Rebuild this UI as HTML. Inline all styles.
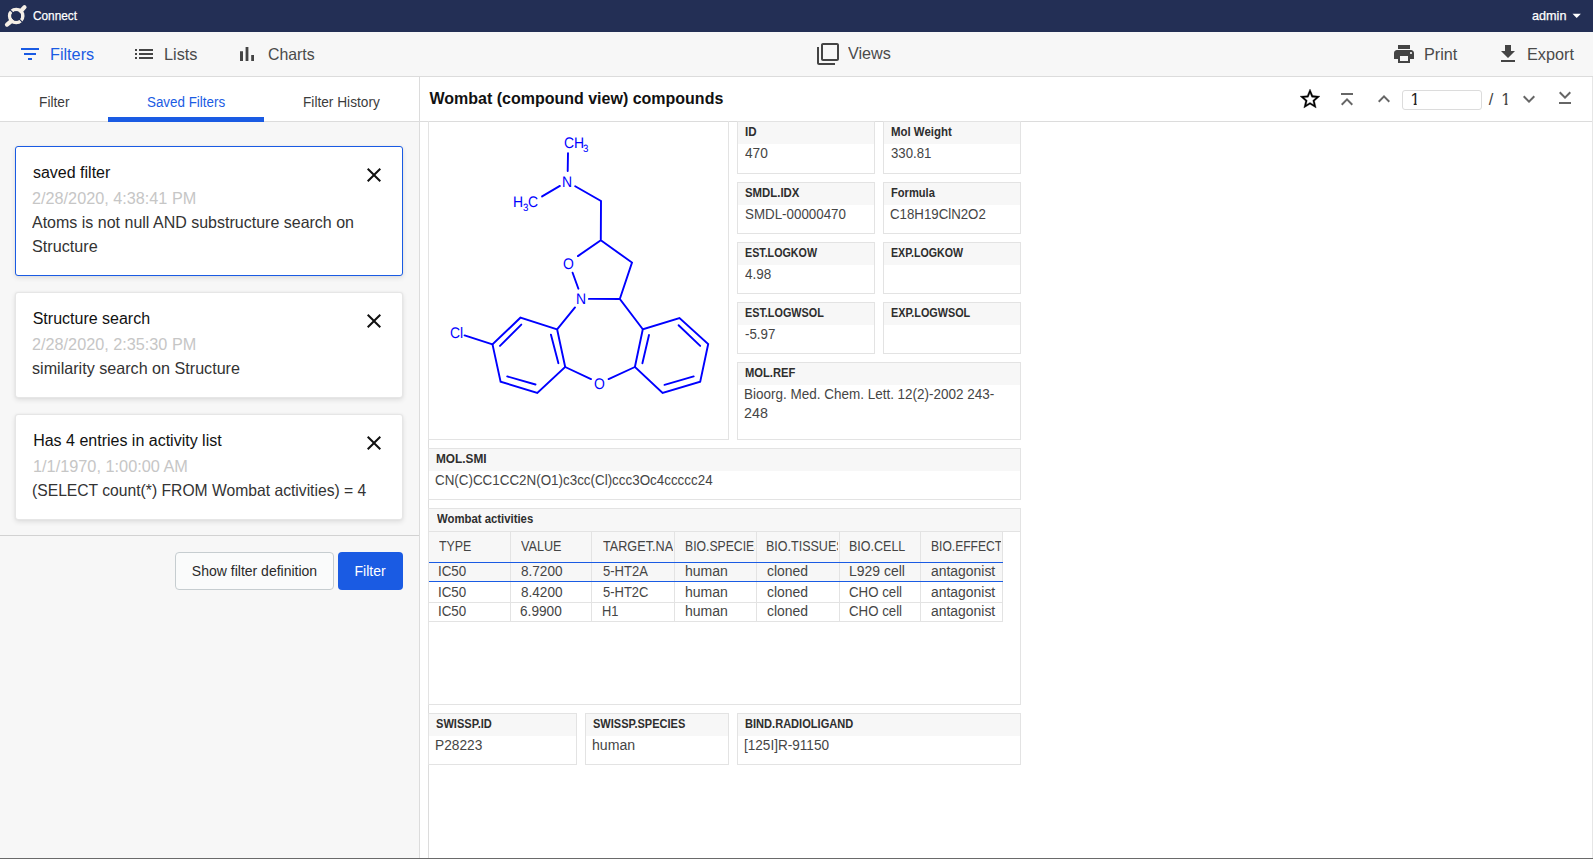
<!DOCTYPE html>
<html lang="en">
<head>
<meta charset="utf-8">
<title>Connect</title>
<style>
html,body{margin:0;padding:0;}
body{width:1593px;height:859px;position:relative;overflow:hidden;background:#fff;
  font-family:"Liberation Sans",sans-serif;}
.a{position:absolute;}
.t{position:absolute;white-space:nowrap;transform-origin:0 0;font-family:"Liberation Sans",sans-serif;}
.clip{position:absolute;overflow:hidden;}
svg{position:absolute;display:block;overflow:visible;}
#nav{left:0;top:0;width:1593px;height:32px;background:#232f55;}
#toolbar{left:0;top:32px;width:1593px;height:44px;background:#f7f7f7;border-bottom:1px solid #dcdcdc;}
#side{left:0;top:77px;width:419px;height:782px;background:#f7f7f7;border-right:1px solid #dcdcdc;}
#tabs{left:0;top:77px;width:419px;height:44px;background:#fff;border-bottom:1px solid #dcdcdc;}
#tabline{left:108px;top:117px;width:156px;height:5px;background:#1a5be3;}
.card{position:absolute;left:15px;width:386px;background:#fff;border:1px solid #e6e6e6;border-radius:3px;
  box-shadow:0 2px 5px rgba(0,0,0,.10),0 0 2px rgba(0,0,0,.05);}
.card.sel{border-color:#1a5be3;}
#sep{left:0;top:535px;width:419px;height:1px;background:#d2d2d2;}
#btn1{left:175px;top:552px;width:157px;height:36px;border:1px solid #c6cdd0;border-radius:4px;background:#fafbfb;}
#btn2{left:338px;top:552px;width:65px;height:38px;border-radius:4px;background:#1a5be3;}
#hdr{left:420px;top:77px;width:1173px;height:44px;background:#fff;border-bottom:1px solid #dcdcdc;}
#pl{left:428px;top:122px;width:1px;height:737px;background:#dcdcdc;}
#rightedge{left:1592px;top:77px;width:1px;height:782px;background:#e6e6e6;}
#bottomline{left:0;top:858px;width:1593px;height:1px;background:#6a6a6a;}
#pginput{left:1402px;top:90px;width:78px;height:18px;border:1px solid #dcdcdc;border-radius:3px;background:#fff;}
.fld{position:absolute;box-sizing:border-box;border:1px solid #e3e3e3;background:#fff;}
.fl{position:absolute;left:0;top:0;right:0;height:22px;background:#f7f7f7;}
#struct{left:428px;top:121px;width:301px;height:319px;box-sizing:border-box;border:1px solid #e3e3e3;border-top:none;}
#act{left:428px;top:508px;width:593px;height:197px;box-sizing:border-box;border:1px solid #e3e3e3;background:#fff;}
#actl{left:429px;top:509px;width:591px;height:22px;background:#f7f7f7;border-bottom:1px solid #e3e3e3;}
#thead{left:429px;top:531px;width:574px;height:31px;background:#f7f7f7;border-top:1px solid #e3e3e3;box-sizing:border-box;}
#row1{left:429px;top:562px;width:574px;height:20px;background:#f7f7f7;border-top:1px solid #1a5be3;border-bottom:1px solid #1a5be3;box-sizing:border-box;}
.hl{position:absolute;left:429px;width:574px;height:1px;background:#e3e3e3;}
.vl{position:absolute;top:532px;width:1px;height:90px;background:#e3e3e3;}
</style>
</head>
<body>
<div class="a" id="nav"></div>
<div class="a" id="toolbar"></div>
<div class="a" id="side"></div>
<div class="a" id="tabs"></div>
<div class="a" id="tabline"></div>
<div class="card sel" style="top:146px;height:128px"></div>
<div class="card" style="top:292px;height:104px"></div>
<div class="card" style="top:414px;height:104px"></div>
<div class="a" id="sep"></div>
<div class="a" id="btn1"></div>
<div class="a" id="btn2"></div>
<div class="a" id="hdr"></div>
<div class="a" id="pl"></div>
<div class="a" id="rightedge"></div>
<div class="a" id="pginput"></div>
<div class="a" id="struct"></div>
<div class="fld" style="left:737px;top:121px;width:138px;height:53px"><div class="fl"></div></div>
<div class="fld" style="left:883px;top:121px;width:138px;height:53px"><div class="fl"></div></div>
<div class="fld" style="left:737px;top:182px;width:138px;height:52px"><div class="fl"></div></div>
<div class="fld" style="left:883px;top:182px;width:138px;height:52px"><div class="fl"></div></div>
<div class="fld" style="left:737px;top:242px;width:138px;height:52px"><div class="fl"></div></div>
<div class="fld" style="left:883px;top:242px;width:138px;height:52px"><div class="fl"></div></div>
<div class="fld" style="left:737px;top:302px;width:138px;height:52px"><div class="fl"></div></div>
<div class="fld" style="left:883px;top:302px;width:138px;height:52px"><div class="fl"></div></div>
<div class="fld" style="left:737px;top:362px;width:284px;height:78px"><div class="fl"></div></div>
<div class="fld" style="left:428px;top:448px;width:593px;height:52px"><div class="fl"></div></div>
<div class="fld" style="left:428px;top:713px;width:149px;height:52px"><div class="fl"></div></div>
<div class="fld" style="left:585px;top:713px;width:144px;height:52px"><div class="fl"></div></div>
<div class="fld" style="left:737px;top:713px;width:284px;height:52px"><div class="fl"></div></div>
<div class="a" id="act"></div>
<div class="a" id="actl"></div>
<div class="a" id="thead"></div>
<div class="a" id="row1"></div>
<div class="hl" style="top:602px"></div>
<div class="hl" style="top:621px"></div>
<div class="vl" style="left:510px"></div>
<div class="vl" style="left:591px"></div>
<div class="vl" style="left:674px"></div>
<div class="vl" style="left:756px"></div>
<div class="vl" style="left:839px"></div>
<div class="vl" style="left:920px"></div>
<div class="vl" style="left:1002px"></div>
<div class="a" id="row1b" style="left:429px;top:562px;width:574px;height:1px;background:#1a5be3"></div>
<div class="a" id="row1c" style="left:429px;top:581px;width:574px;height:1px;background:#1a5be3"></div>

<!-- logo -->
<svg style="left:0;top:0" width="40" height="32" viewBox="0 0 40 32">
  <circle cx="16.2" cy="16" r="6.6" fill="none" stroke="#f5efe6" stroke-width="3.5"/>
  <line x1="9.6" y1="9.4" x2="22.8" y2="22.6" stroke="#232f55" stroke-width="1.1"/>
  <circle cx="16.2" cy="16" r="4.85" fill="#232f55"/>
  <line x1="21" y1="11" x2="24.5" y2="7.2" stroke="#f5efe6" stroke-width="4.2" stroke-linecap="round"/>
  <line x1="11.4" y1="21" x2="7" y2="24.6" stroke="#f5efe6" stroke-width="4.2" stroke-linecap="round"/>
</svg>
<!-- nav caret -->
<svg style="left:1572px;top:13px" width="10" height="6" viewBox="0 0 10 6"><path d="M0.5 0.8h8.4l-4.2 4.2z" fill="#fff"/></svg>

<!-- toolbar icons -->
<svg style="left:18px;top:42px" width="24" height="24" viewBox="0 0 24 24"><path fill="#1a5be3" d="M10 18h4v-2h-4v2zM3 6v2h18V6H3zm3 7h12v-2H6v2z"/></svg>
<svg style="left:132px;top:42px" width="24" height="24" viewBox="0 0 24 24"><path fill="#444" d="M3 13h2v-2H3v2zm0 4h2v-2H3v2zm0-8h2V7H3v2zm4 4h14v-2H7v2zm0 4h14v-2H7v2zM7 7v2h14V7H7z"/></svg>
<svg style="left:235px;top:42px" width="24" height="24" viewBox="0 0 24 24"><path fill="#444" d="M5 9.2h3V19H5zM10.6 5h2.8v14h-2.8zm5.6 8H19v6h-2.8z"/></svg>
<svg style="left:816px;top:42px" width="24" height="24" viewBox="0 0 24 24"><path fill="#444" d="M3 5H1v16c0 1.1.9 2 2 2h16v-2H3V5zm18-4H7c-1.1 0-2 .9-2 2v14c0 1.1.9 2 2 2h14c1.1 0 2-.9 2-2V3c0-1.1-.9-2-2-2zm0 16H7V3h14v14z"/></svg>
<svg style="left:1392px;top:42px" width="24" height="24" viewBox="0 0 24 24"><path fill="#444" d="M19 8H5c-1.66 0-3 1.34-3 3v6h4v4h12v-4h4v-6c0-1.66-1.34-3-3-3zm-3 11H8v-5h8v5zm3-7c-.55 0-1-.45-1-1s.45-1 1-1 1 .45 1 1-.45 1-1 1zm-1-9H6v4h12V3z"/></svg>
<svg style="left:1496px;top:42px" width="24" height="24" viewBox="0 0 24 24"><path fill="#444" d="M19 9h-4V3H9v6H5l7 7 7-7zM5 18v2h14v-2H5z"/></svg>

<!-- card close icons -->
<svg style="left:362px;top:163px" width="24" height="24" viewBox="0 0 24 24"><path fill="#111" d="M19 6.41L17.59 5 12 10.59 6.41 5 5 6.41 10.59 12 5 17.59 6.41 19 12 13.41 17.59 19 19 17.59 13.41 12z"/></svg>
<svg style="left:362px;top:309px" width="24" height="24" viewBox="0 0 24 24"><path fill="#111" d="M19 6.41L17.59 5 12 10.59 6.41 5 5 6.41 10.59 12 5 17.59 6.41 19 12 13.41 17.59 19 19 17.59 13.41 12z"/></svg>
<svg style="left:362px;top:431px" width="24" height="24" viewBox="0 0 24 24"><path fill="#111" d="M19 6.41L17.59 5 12 10.59 6.41 5 5 6.41 10.59 12 5 17.59 6.41 19 12 13.41 17.59 19 19 17.59 13.41 12z"/></svg>

<!-- header icons -->
<svg style="left:1297.9px;top:87.4px" width="24" height="24" viewBox="0 0 24 24"><path fill="#000" stroke="#000" stroke-width="0.3" d="M22 9.24l-7.19-.62L12 2 9.19 8.63 2 9.24l5.46 4.73L5.82 21 12 17.27 18.18 21l-1.63-7.03L22 9.24zM12 15.4l-3.76 2.27 1-4.28-3.32-2.88 4.38-.38L12 6.1l1.71 4.04 4.38.38-3.32 2.88 1 4.28L12 15.4z"/></svg>
<svg style="left:1335.4px;top:86.6px" width="24" height="24" viewBox="0 0 24 24"><path fill="#666" transform="rotate(90 12 12)" d="M18.41 16.59L13.82 12l4.59-4.59L17 6l-6 6 6 6zM6 6h2v12H6z"/></svg>
<svg style="left:1372.4px;top:87.3px" width="24" height="24" viewBox="0 0 24 24"><path fill="#666" d="M12 8l-6 6 1.41 1.41L12 10.83l4.59 4.58L18 14z"/></svg>
<svg style="left:1517.2px;top:87.3px" width="24" height="24" viewBox="0 0 24 24"><path fill="#666" d="M16.59 8.59L12 13.17 7.41 8.59 6 10l6 6 6-6z"/></svg>
<svg style="left:1552.9px;top:86.2px" width="24" height="24" viewBox="0 0 24 24"><path fill="#666" transform="rotate(90 12 12)" d="M5.59 7.41L10.18 12l-4.59 4.59L7 18l6-6-6-6zM16 6h2v12h-2z"/></svg>

<!-- molecule -->
<svg style="left:0;top:0" width="1593" height="859" viewBox="0 0 1593 859">
<g stroke="#0000ff" stroke-width="1.9" stroke-linecap="round" fill="none">
<path d="M568 153.1L567.7 171.1M559.9 185.9L542.1 196.4M575.2 186.2L601 201L600.8 240.2L577.9 256.1M600.8 240.2L632 262.6L619.8 299M572.6 272.7L578.4 288.7M588.9 298.9L619.8 299L642.8 329.3M575 307.4L557.1 329.3"/>
<path d="M557.1 329.3L520.4 317.7L492.5 344.4L500.6 381.7L537.3 393L565.2 367Z"/>
<path d="M521.3 324.6L500 345.9M507.2 376.4L535.5 384.5M550.9 334.6L558.4 363.2"/>
<path d="M492.5 344.4L464.6 335.4M565.2 367L591 379.1M608.6 379.1L634.9 367"/>
<path d="M642.8 329.3L634.9 367L662.6 393L700.2 381.7L708.2 344L679.5 318Z"/>
<path d="M649 335L642.4 363.2M678.6 325.2L700.2 345.9M664.5 384.9L693.7 376.4"/>
</g>
</svg>

<span class="t" style="left:33.14px;top:8.00px;font-size:13.39px;line-height:15px;color:#ffffff;-webkit-text-stroke:0.25px #ffffff;transform:scaleX(0.8846);">Connect</span>
<span class="t" style="left:1531.80px;top:8.00px;font-size:13.39px;line-height:15px;color:#ffffff;-webkit-text-stroke:0.25px #ffffff;transform:scaleX(0.9462);">admin</span>
<span class="t" style="left:50.23px;top:45.00px;font-size:16.48px;line-height:18px;color:#1a5be3;transform:scaleX(0.9847);">Filters</span>
<span class="t" style="left:163.93px;top:45.00px;font-size:16.48px;line-height:18px;color:#4a4a4a;transform:scaleX(0.9881);">Lists</span>
<span class="t" style="left:267.96px;top:45.00px;font-size:16.48px;line-height:18px;color:#4a4a4a;transform:scaleX(0.9629);">Charts</span>
<span class="t" style="left:848.40px;top:44.00px;font-size:16.48px;line-height:18px;color:#4a4a4a;transform:scaleX(0.9827);">Views</span>
<span class="t" style="left:1424.33px;top:45.00px;font-size:16.48px;line-height:18px;color:#4a4a4a;transform:scaleX(0.9830);">Print</span>
<span class="t" style="left:1527.23px;top:45.00px;font-size:16.48px;line-height:18px;color:#4a4a4a;transform:scaleX(0.9871);">Export</span>
<span class="t" style="left:38.63px;top:94.00px;font-size:14.21px;line-height:16px;color:#3c3c3c;transform:scaleX(0.9672);">Filter</span>
<span class="t" style="left:147.18px;top:94.00px;font-size:14.21px;line-height:16px;color:#1a5be3;transform:scaleX(0.9423);">Saved Filters</span>
<span class="t" style="left:303.13px;top:94.00px;font-size:14.21px;line-height:16px;color:#3c3c3c;transform:scaleX(0.9640);">Filter History</span>
<span class="t" style="left:32.95px;top:164.00px;font-size:16px;line-height:17px;color:#111111;">saved filter</span>
<span class="t" style="left:31.64px;top:189.00px;font-size:16.48px;line-height:18px;color:#c6c6c6;transform:scaleX(0.9856);">2/28/2020, 4:38:41 PM</span>
<span class="t" style="left:32.40px;top:213.00px;font-size:16.48px;line-height:18px;color:#333333;transform:scaleX(0.9718);">Atoms is not null AND substructure search on</span>
<span class="t" style="left:31.89px;top:237.00px;font-size:16.48px;line-height:18px;color:#333333;transform:scaleX(0.9836);">Structure</span>
<span class="t" style="left:32.70px;top:310.00px;font-size:16px;line-height:17px;color:#111111;">Structure search</span>
<span class="t" style="left:31.64px;top:335.00px;font-size:16.48px;line-height:18px;color:#c6c6c6;transform:scaleX(0.9856);">2/28/2020, 2:35:30 PM</span>
<span class="t" style="left:32.15px;top:359.00px;font-size:16.48px;line-height:18px;color:#333333;transform:scaleX(0.9794);">similarity search on Structure</span>
<span class="t" style="left:33.15px;top:432.00px;font-size:16px;line-height:17px;color:#111111;">Has 4 entries in activity list</span>
<span class="t" style="left:32.88px;top:457.00px;font-size:16.48px;line-height:18px;color:#c6c6c6;transform:scaleX(0.9894);">1/1/1970, 1:00:00 AM</span>
<span class="t" style="left:31.66px;top:481.00px;font-size:16.48px;line-height:18px;color:#333333;transform:scaleX(0.9517);">(SELECT count(*) FROM Wombat activities) = 4</span>
<span class="t" style="left:191.86px;top:563.00px;font-size:14px;line-height:16px;color:#2a2a2a;">Show filter definition</span>
<span class="t" style="left:354.51px;top:563.00px;font-size:14px;line-height:16px;color:#ffffff;">Filter</span>
<span class="t" style="left:429.40px;top:90.00px;font-size:16px;line-height:17px;color:#111111;font-weight:700;">Wombat (compound view) compounds</span>
<span class="t" style="left:1410.47px;top:90.00px;font-size:16.5px;line-height:18px;color:#222222;clip-path:polygon(0 0,100% 0,100% 12.9px,6.2px 12.9px,6.2px 100%,3.2px 100%,3.2px 12.9px,0 12.9px);">1</span>
<span class="t" style="left:1488.70px;top:90.00px;font-size:16.5px;line-height:18px;color:#444444;">/</span>
<span class="t" style="left:1501.37px;top:90.00px;font-size:16.5px;line-height:18px;color:#444444;clip-path:polygon(0 0,100% 0,100% 12.9px,6.2px 12.9px,6.2px 100%,3.2px 100%,3.2px 12.9px,0 12.9px);">1</span>
<span class="t" style="left:744.97px;top:125.00px;font-size:12.67px;line-height:14px;color:#2e2e2e;font-weight:700;transform:scaleX(0.9147);">ID</span>
<span class="t" style="left:744.89px;top:145.00px;font-size:14.42px;line-height:16px;color:#454545;transform:scaleX(0.9500);">470</span>
<span class="t" style="left:890.98px;top:125.00px;font-size:12.67px;line-height:14px;color:#2e2e2e;font-weight:700;transform:scaleX(0.9035);">Mol Weight</span>
<span class="t" style="left:890.69px;top:145.00px;font-size:14.42px;line-height:16px;color:#454545;transform:scaleX(0.9148);">330.81</span>
<span class="t" style="left:745.39px;top:186.00px;font-size:12.67px;line-height:14px;color:#2e2e2e;font-weight:700;transform:scaleX(0.8988);">SMDL.IDX</span>
<span class="t" style="left:744.68px;top:206.00px;font-size:14.42px;line-height:16px;color:#454545;transform:scaleX(0.9269);">SMDL-00000470</span>
<span class="t" style="left:891.00px;top:186.00px;font-size:12.67px;line-height:14px;color:#2e2e2e;font-weight:700;transform:scaleX(0.8786);">Formula</span>
<span class="t" style="left:890.48px;top:206.00px;font-size:14.42px;line-height:16px;color:#454545;transform:scaleX(0.9200);">C18H19ClN2O2</span>
<span class="t" style="left:745.02px;top:246.00px;font-size:12.67px;line-height:14px;color:#2e2e2e;font-weight:700;transform:scaleX(0.8464);">EST.LOGKOW</span>
<span class="t" style="left:744.89px;top:266.00px;font-size:14.42px;line-height:16px;color:#454545;transform:scaleX(0.9356);">4.98</span>
<span class="t" style="left:891.03px;top:246.00px;font-size:12.67px;line-height:14px;color:#2e2e2e;font-weight:700;transform:scaleX(0.8416);">EXP.LOGKOW</span>
<span class="t" style="left:745.02px;top:306.00px;font-size:12.67px;line-height:14px;color:#2e2e2e;font-weight:700;transform:scaleX(0.8559);">EST.LOGWSOL</span>
<span class="t" style="left:744.68px;top:326.00px;font-size:14.42px;line-height:16px;color:#454545;transform:scaleX(0.9236);">-5.97</span>
<span class="t" style="left:891.02px;top:306.00px;font-size:12.67px;line-height:14px;color:#2e2e2e;font-weight:700;transform:scaleX(0.8557);">EXP.LOGWSOL</span>
<span class="t" style="left:744.99px;top:366.00px;font-size:12.67px;line-height:14px;color:#2e2e2e;font-weight:700;transform:scaleX(0.8840);">MOL.REF</span>
<span class="t" style="left:744.05px;top:386.00px;font-size:14.42px;line-height:16px;color:#454545;transform:scaleX(0.9359);">Bioorg. Med. Chem. Lett. 12(2)-2002 243-</span>
<span class="t" style="left:744.43px;top:405.00px;font-size:14.42px;line-height:16px;color:#454545;transform:scaleX(0.9913);">248</span>
<span class="t" style="left:435.95px;top:452.00px;font-size:12.67px;line-height:14px;color:#2e2e2e;font-weight:700;transform:scaleX(0.9359);">MOL.SMI</span>
<span class="t" style="left:435.47px;top:472.00px;font-size:14.42px;line-height:16px;color:#454545;transform:scaleX(0.9298);">CN(C)CC1CC2N(O1)c3cc(Cl)ccc3Oc4ccccc24</span>
<span class="t" style="left:436.39px;top:717.00px;font-size:12.67px;line-height:14px;color:#2e2e2e;font-weight:700;transform:scaleX(0.8748);">SWISSP.ID</span>
<span class="t" style="left:435.03px;top:737.00px;font-size:14.42px;line-height:16px;color:#454545;transform:scaleX(0.9520);">P28223</span>
<span class="t" style="left:593.40px;top:717.00px;font-size:12.67px;line-height:14px;color:#2e2e2e;font-weight:700;transform:scaleX(0.8709);">SWISSP.SPECIES</span>
<span class="t" style="left:592.22px;top:737.00px;font-size:14.42px;line-height:16px;color:#454545;transform:scaleX(0.9792);">human</span>
<span class="t" style="left:745.00px;top:717.00px;font-size:12.67px;line-height:14px;color:#2e2e2e;font-weight:700;transform:scaleX(0.8746);">BIND.RADIOLIGAND</span>
<span class="t" style="left:744.25px;top:737.00px;font-size:14.42px;line-height:16px;color:#454545;transform:scaleX(0.9420);">[125I]R-91150</span>
<span class="t" style="left:436.50px;top:512.00px;font-size:12.67px;line-height:14px;color:#2e2e2e;font-weight:700;transform:scaleX(0.8963);">Wombat activities</span>
<div class="clip" style="left:429px;width:80px;top:538.00px;height:16px"><span class="t" style="left:10.31px;top:0;font-size:14.42px;line-height:16px;color:#444444;transform:scaleX(0.8607);">TYPE</span></div>
<div class="clip" style="left:511px;width:79px;top:538.00px;height:16px"><span class="t" style="left:10.10px;top:0;font-size:14.42px;line-height:16px;color:#444444;transform:scaleX(0.8748);">VALUE</span></div>
<div class="clip" style="left:592px;width:81px;top:538.00px;height:16px"><span class="t" style="left:10.80px;top:0;font-size:14.42px;line-height:16px;color:#444444;transform:scaleX(0.8783);">TARGET.NAME</span></div>
<div class="clip" style="left:675px;width:80px;top:538.00px;height:16px"><span class="t" style="left:9.75px;top:0;font-size:14.42px;line-height:16px;color:#444444;transform:scaleX(0.8474);">BIO.SPECIES</span></div>
<div class="clip" style="left:757px;width:81px;top:538.00px;height:16px"><span class="t" style="left:9.12px;top:0;font-size:14.42px;line-height:16px;color:#444444;transform:scaleX(0.8687);">BIO.TISSUES</span></div>
<div class="clip" style="left:840px;width:79px;top:538.00px;height:16px"><span class="t" style="left:8.82px;top:0;font-size:14.42px;line-height:16px;color:#444444;transform:scaleX(0.8686);">BIO.CELL</span></div>
<div class="clip" style="left:921px;width:80px;top:538.00px;height:16px"><span class="t" style="left:9.55px;top:0;font-size:14.42px;line-height:16px;color:#444444;transform:scaleX(0.8390);">BIO.EFFECT</span></div>
<div class="clip" style="left:429px;width:80px;top:563.00px;height:16px"><span class="t" style="left:9.45px;top:0;font-size:14.42px;line-height:16px;color:#454545;transform:scaleX(0.9284);">IC50</span></div>
<div class="clip" style="left:511px;width:79px;top:563.00px;height:16px"><span class="t" style="left:9.68px;top:0;font-size:14.42px;line-height:16px;color:#454545;transform:scaleX(0.9424);">8.7200</span></div>
<div class="clip" style="left:592px;width:81px;top:563.00px;height:16px"><span class="t" style="left:10.59px;top:0;font-size:14.42px;line-height:16px;color:#454545;transform:scaleX(0.9046);">5-HT2A</span></div>
<div class="clip" style="left:675px;width:80px;top:563.00px;height:16px"><span class="t" style="left:9.82px;top:0;font-size:14.42px;line-height:16px;color:#454545;transform:scaleX(0.9745);">human</span></div>
<div class="clip" style="left:757px;width:81px;top:563.00px;height:16px"><span class="t" style="left:9.66px;top:0;font-size:14.42px;line-height:16px;color:#454545;transform:scaleX(0.9677);">cloned</span></div>
<div class="clip" style="left:840px;width:79px;top:563.00px;height:16px"><span class="t" style="left:8.71px;top:0;font-size:14.42px;line-height:16px;color:#454545;transform:scaleX(0.9686);">L929 cell</span></div>
<div class="clip" style="left:921px;width:80px;top:563.00px;height:16px"><span class="t" style="left:10.06px;top:0;font-size:14.42px;line-height:16px;color:#454545;transform:scaleX(0.9661);">antagonist</span></div>
<div class="clip" style="left:429px;width:80px;top:584.00px;height:16px"><span class="t" style="left:9.45px;top:0;font-size:14.42px;line-height:16px;color:#454545;transform:scaleX(0.9284);">IC50</span></div>
<div class="clip" style="left:511px;width:79px;top:584.00px;height:16px"><span class="t" style="left:9.68px;top:0;font-size:14.42px;line-height:16px;color:#454545;transform:scaleX(0.9424);">8.4200</span></div>
<div class="clip" style="left:592px;width:81px;top:584.00px;height:16px"><span class="t" style="left:10.59px;top:0;font-size:14.42px;line-height:16px;color:#454545;transform:scaleX(0.9005);">5-HT2C</span></div>
<div class="clip" style="left:675px;width:80px;top:584.00px;height:16px"><span class="t" style="left:9.82px;top:0;font-size:14.42px;line-height:16px;color:#454545;transform:scaleX(0.9745);">human</span></div>
<div class="clip" style="left:757px;width:81px;top:584.00px;height:16px"><span class="t" style="left:9.66px;top:0;font-size:14.42px;line-height:16px;color:#454545;transform:scaleX(0.9677);">cloned</span></div>
<div class="clip" style="left:840px;width:79px;top:584.00px;height:16px"><span class="t" style="left:9.18px;top:0;font-size:14.42px;line-height:16px;color:#454545;transform:scaleX(0.9204);">CHO cell</span></div>
<div class="clip" style="left:921px;width:80px;top:584.00px;height:16px"><span class="t" style="left:10.06px;top:0;font-size:14.42px;line-height:16px;color:#454545;transform:scaleX(0.9661);">antagonist</span></div>
<div class="clip" style="left:429px;width:80px;top:603.00px;height:16px"><span class="t" style="left:9.45px;top:0;font-size:14.42px;line-height:16px;color:#454545;transform:scaleX(0.9284);">IC50</span></div>
<div class="clip" style="left:511px;width:79px;top:603.00px;height:16px"><span class="t" style="left:9.46px;top:0;font-size:14.42px;line-height:16px;color:#454545;transform:scaleX(0.9473);">6.9900</span></div>
<div class="clip" style="left:592px;width:81px;top:603.00px;height:16px"><span class="t" style="left:10.00px;top:0;font-size:14.42px;line-height:16px;color:#454545;transform:scaleX(0.8910);">H1</span></div>
<div class="clip" style="left:675px;width:80px;top:603.00px;height:16px"><span class="t" style="left:9.82px;top:0;font-size:14.42px;line-height:16px;color:#454545;transform:scaleX(0.9745);">human</span></div>
<div class="clip" style="left:757px;width:81px;top:603.00px;height:16px"><span class="t" style="left:9.66px;top:0;font-size:14.42px;line-height:16px;color:#454545;transform:scaleX(0.9677);">cloned</span></div>
<div class="clip" style="left:840px;width:79px;top:603.00px;height:16px"><span class="t" style="left:9.18px;top:0;font-size:14.42px;line-height:16px;color:#454545;transform:scaleX(0.9204);">CHO cell</span></div>
<div class="clip" style="left:921px;width:80px;top:603.00px;height:16px"><span class="t" style="left:10.06px;top:0;font-size:14.42px;line-height:16px;color:#454545;transform:scaleX(0.9661);">antagonist</span></div>
<span class="t" style="left:563.79px;top:134.30px;font-size:15.3px;line-height:17px;color:#0000ff;transform:scaleX(0.9100) rotate(0.03deg);">CH</span>
<span class="t" style="left:582.54px;top:142.20px;font-size:10.6px;line-height:12px;color:#0000ff;transform:scaleX(0.9100) rotate(0.03deg);">3</span>
<span class="t" style="left:562.40px;top:173.40px;font-size:15.3px;line-height:17px;color:#0000ff;transform:scaleX(0.9100) rotate(0.03deg);">N</span>
<span class="t" style="left:512.80px;top:192.70px;font-size:15.3px;line-height:17px;color:#0000ff;transform:scaleX(0.9100) rotate(0.03deg);">H</span>
<span class="t" style="left:522.74px;top:200.50px;font-size:10.6px;line-height:12px;color:#0000ff;transform:scaleX(0.9100) rotate(0.03deg);">3</span>
<span class="t" style="left:528.39px;top:192.70px;font-size:15.3px;line-height:17px;color:#0000ff;transform:scaleX(0.9100) rotate(0.03deg);">C</span>
<span class="t" style="left:563.36px;top:254.60px;font-size:15.3px;line-height:17px;color:#0000ff;transform:scaleX(0.9100) rotate(0.03deg);">O</span>
<span class="t" style="left:576.00px;top:290.30px;font-size:15.3px;line-height:17px;color:#0000ff;transform:scaleX(0.9100) rotate(0.03deg);">N</span>
<span class="t" style="left:594.26px;top:375.40px;font-size:15.3px;line-height:17px;color:#0000ff;transform:scaleX(0.9100) rotate(0.03deg);">O</span>
<span class="t" style="left:449.66px;top:323.50px;font-size:15.3px;line-height:17px;color:#0000ff;transform:scaleX(0.9100) rotate(0.03deg);">Cl</span>
<div class="a" id="bottomline"></div>
</body>
</html>
